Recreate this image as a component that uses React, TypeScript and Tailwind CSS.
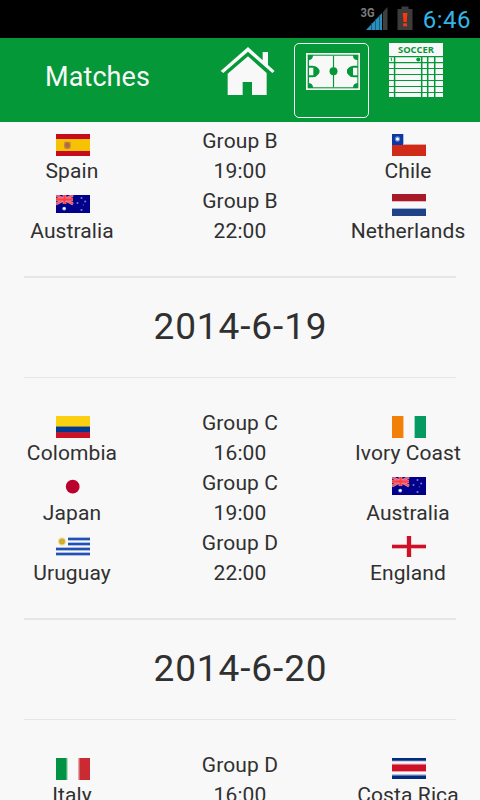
import React from "react";

type Team = "Spain" | "Chile" | "Australia" | "Netherlands" | "Colombia" | "Ivory Coast" | "Japan" | "Uruguay" | "England" | "Italy" | "Costa Rica";
type Match = { home: Team; away: Team; group: string; time: string };

const days: { date: string; matches: Match[] }[] = [
  {
    date: "2014-6-19",
    matches: [
      { home: "Colombia", away: "Ivory Coast", group: "Group C", time: "16:00" },
      { home: "Japan", away: "Australia", group: "Group C", time: "19:00" },
      { home: "Uruguay", away: "England", group: "Group D", time: "22:00" },
    ],
  },
  {
    date: "2014-6-20",
    matches: [{ home: "Italy", away: "Costa Rica", group: "Group D", time: "16:00" }],
  },
];

const earlier: Match[] = [
  { home: "Spain", away: "Chile", group: "Group B", time: "19:00" },
  { home: "Australia", away: "Netherlands", group: "Group B", time: "22:00" },
];

function FlagArt({ team }: { team: Team }) {
  switch (team) {
    case "Spain":
      return (
        <>
          <rect width="34" height="22" fill="#c60b1e" />
          <rect y="5" width="34" height="12" fill="#f8c204" />
          <rect x="8" y="7.5" width="2" height="7" fill="#e0a02c" />
          <rect x="13" y="7.5" width="2" height="7" fill="#e0a02c" />
          <ellipse cx="11.3" cy="11.3" rx="3" ry="3.6" fill="#b87838" />
          <rect x="10.5" y="9.5" width="2" height="3" fill="#8b6a72" />
        </>
      );
    case "Chile":
      return (
        <>
          <rect y="10" width="34" height="12" fill="#d02a18" />
          <rect x="11" y="10" width="23" height="1" fill="#e6a49d" />
          <rect width="11" height="11" fill="#0a39a6" />
          <rect x="11" width="1" height="10" fill="#a9bbe0" />
          <circle cx="5.500" cy="5" r="2.700" fill="#6c88c9" />
          <circle cx="5.500" cy="5" r="1.500" fill="#fff" />
        </>
      );
    case "Australia":
      return (
        <>
          <rect width="34" height="18" fill="#00008b" />
          <path d="M0 0L17 9M17 0L0 9" stroke="#e9a0b4" strokeWidth="2.600" />
          <path d="M0 0L17 9M17 0L0 9" stroke="#f05560" strokeWidth="1.600" />
          <path d="M8.500 0V9M0 4.500H17" stroke="#f3a5b0" strokeWidth="3.600" />
          <path d="M8.500 0V9M0 4.500H17" stroke="#ff3d45" strokeWidth="2.400" />
          <circle cx="8.200" cy="13.600" r="1.900" fill="#b9b9e8" />
          <circle cx="8.200" cy="13.600" r="1" fill="#fff" />
          <g fill="#7d7dc8">
            <circle cx="25.500" cy="3" r="1" />
            <circle cx="21.500" cy="8" r="1" />
            <circle cx="29.200" cy="6.500" r="1" />
            <circle cx="27.300" cy="9.800" r=".6" />
            <circle cx="25.500" cy="15" r="1.100" />
          </g>
        </>
      );
    case "Netherlands":
      return (
        <>
          <rect width="34" height="7" fill="#a91a29" />
          <rect y="7" width="34" height="1" fill="#e3b5ba" />
          <rect y="14" width="34" height="1" fill="#a3b2d0" />
          <rect y="15" width="34" height="7" fill="#1f4289" />
        </>
      );
    case "Colombia":
      return (
        <>
          <rect width="34" height="11" fill="#fbd010" />
          <rect y="10" width="34" height="1" fill="#8f8a4c" />
          <rect y="11" width="34" height="5" fill="#003991" />
          <rect y="16" width="34" height="1" fill="#9a2550" />
          <rect y="17" width="34" height="5" fill="#ce1024" />
        </>
      );
    case "Japan":
      return <circle cx="16.700" cy="10.700" r="6.900" fill="#bc002d" />;
    case "Uruguay":
      return (
        <>
          <g fill="#a9bde3">
            <rect x="12" y="0" width="22" height="4" />
            <rect x="12" y="5" width="22" height="4" />
            <rect y="10" width="34" height="4" />
            <rect y="15" width="34" height="4" />
          </g>
          <g fill="#2450b4">
            <rect x="12" y="1" width="22" height="2" />
            <rect x="12" y="6" width="22" height="2" />
            <rect y="11" width="34" height="2" />
            <rect y="16" width="34" height="2" />
          </g>
          <circle cx="6" cy="4.500" r="4.200" fill="#eee1ac" />
          <circle cx="6" cy="4.500" r="3" fill="#cfae2c" />
        </>
      );
    case "England":
      return (
        <>
          <path d="M17 0V21M0 10.500H34" stroke="#ecafb8" strokeWidth="5" />
          <path d="M17 0V21" stroke="#ce1126" strokeWidth="4" />
          <path d="M0 10.500H34" stroke="#ce1126" strokeWidth="3" />
        </>
      );
    case "Ivory Coast":
      return (
        <>
          <rect width="11" height="22" fill="#f27f06" />
          <rect x="11" width="1" height="22" fill="#f9c48d" />
          <rect x="22" width="1" height="22" fill="#9bd4bf" />
          <rect x="23" width="11" height="22" fill="#049a62" />
        </>
      );
    case "Italy":
      return (
        <>
          <rect width="10" height="22" fill="#009344" />
          <rect x="10" width="1" height="22" fill="#4bb27c" />
          <rect x="11" width="1" height="22" fill="#b4ddc6" />
          <rect x="22" width="1" height="22" fill="#e3a3a7" />
          <rect x="23" width="1" height="22" fill="#d4686e" />
          <rect x="24" width="10" height="22" fill="#ca2b33" />
        </>
      );
    case "Costa Rica":
      return (
        <>
          <rect width="34" height="3" fill="#002b7f" />
          <rect y="2" width="34" height="1" fill="#36599a" />
          <rect y="3" width="34" height="1" fill="#c8d2e4" />
          <rect y="5" width="34" height="1" fill="#f3d5da" />
          <rect y="6" width="34" height="1" fill="#dc7280" />
          <rect y="7" width="34" height="6" fill="#ce1126" />
          <rect y="13" width="34" height="1" fill="#ee9ca7" />
          <rect y="16" width="34" height="1" fill="#b4c2dc" />
          <rect y="17" width="34" height="1" fill="#5d79ac" />
          <rect y="18" width="34" height="3" fill="#002b7f" />
        </>
      );
  }
}

function TeamCell({ team }: { team: Team }) {
  const lower = team === "Australia" || team === "Uruguay";
  return (
    <div className="flex w-[144px] flex-col items-center">
      <div className={lower ? "h-[30px] pt-[9px] pl-[2px]" : "h-[30px] pt-2 pl-[2px]"}>
        <svg width="34" height="22" viewBox="0 0 34 22" aria-label={team}>
          <FlagArt team={team} />
        </svg>
      </div>
      <div className="h-[30px] whitespace-nowrap leading-[30px]">{team}</div>
    </div>
  );
}

function MatchRow({ match }: { match: Match }) {
  return (
    <div className="flex h-[60px] text-[21px] tracking-[0.1px]">
      <TeamCell team={match.home} />
      <div className="w-[192px] text-center leading-[30px]">
        <div>{match.group}</div>
        <div>{match.time}</div>
      </div>
      <TeamCell team={match.away} />
    </div>
  );
}

function StatusBar() {
  return (
    <div className="flex h-[38px] shrink-0 items-center justify-end bg-black pr-[9px]">
      <svg width="60" height="38" viewBox="360 0 60 38">
        <text x="360.500" y="17" fontSize="13" fontWeight="700" fontFamily="Roboto, sans-serif" fill="#7c7c7c" textLength="14" lengthAdjust="spacingAndGlyphs">3G</text>
        <path d="M366 30L382 13V30z" fill="#2b8fbd" />
        <path d="M383 30V12L387.500 7V30z" fill="#3f3f3f" />
        <path d="M371.500 23V30M375.500 19V30M379.500 15V30" stroke="#14516d" strokeWidth=".8" />
        <path d="M397.500 9h4V6.500h7V9h4V30h-15z" fill="#3c3c3c" />
        <path d="M402.800 13h4.600l-.8 9h-3z" fill="#ff3510" />
        <rect x="403.200" y="23.300" width="3.800" height="3" fill="#ff3510" />
      </svg>
      <span className="ml-[3px] pt-[2px] text-[24px] leading-[36px] tracking-[0.5px] text-[#33b5e5]">6:46</span>
    </div>
  );
}

function HomeIcon() {
  return (
    <svg width="75" height="75" viewBox="210 43 75 75">
      <g transform="translate(200 36) scale(.33333)" fill="#f8f8f8">
        <path d="M144 33L188 73V48H204V87L224 105L217 111L144 47L70 111L62 105z" />
        <path d="M144 61L200 111V177H156V138H128V177H83V113z" />
      </g>
    </svg>
  );
}

function PitchIcon() {
  return (
    <svg width="73" height="73" viewBox="295 44 73 73">
      <g transform="translate(285 36) scale(.33333)">
        <rect x="63" y="51" width="162" height="111" fill="#f8f8f8" />
        <rect x="68" y="56" width="152" height="101" fill="#049839" />
        <path d="M84 59H204Q205 72 217 72V89H204L186 101V111L204 124H217V141Q205 142 204 154H84Q83 142 72 141V124H84L103 111V101L84 89H72V72Q83 71 84 59z" fill="#f8f8f8" />
        <path d="M72 91H91Q103 97 103 106Q103 115 91 123H72zM217 91H198Q186 97 186 106Q186 115 198 123H217z" fill="#049839" />
        <path d="M72 95H85V118H72zM204 95H217V118H204z" fill="#f8f8f8" />
        <path d="M145.500 59V154" stroke="#049839" strokeWidth="3.500" />
        <circle cx="145.500" cy="106" r="12" fill="#049839" />
      </g>
    </svg>
  );
}

function ScoreIcon() {
  return (
    <svg width="75" height="75" viewBox="378 43 75 75">
      <rect x="389" y="43" width="54" height="54" fill="#f8f8f8" />
      <text x="398" y="53" fontSize="9" fontWeight="700" fontFamily="Open Sans, sans-serif" fill="#049839" textLength="36" lengthAdjust="spacingAndGlyphs">SOCCER</text>
      <path d="M389 56.700H443M389 62.600H443M389 68.500H443M389 74.500H443M389 80.500H443M389 86.500H443M389 92.500H443" stroke="#049839" strokeWidth="1.200" />
      <path d="M394.600 57V97M421.700 57V97M427.700 57V97M434.700 57V97" stroke="#049839" strokeWidth="1.500" />
      <circle cx="418.300" cy="59.500" r="2" fill="#049839" />
      <path d="M390.500 58.800L391.500 58V61" stroke="#049839" strokeWidth=".8" fill="none" />
    </svg>
  );
}

export default function App() {
  return (
    <div className="flex h-[800px] w-[480px] flex-col overflow-hidden bg-[#f8f8f8] text-[#303030] [font-family:Roboto,'Liberation_Sans',sans-serif]">
      <StatusBar />
      <header className="flex h-[84px] shrink-0 gap-[9px] bg-[#049839] pt-[5px]">
        <h1 className="w-[201px] pl-[45px] text-[27px] leading-[68px] tracking-[0.1px] text-[#f8f8f8]">Matches</h1>
        <HomeIcon />
        <div className="h-[75px] w-[75px] rounded-[5px] border border-[#f8f8f8]">
          <PitchIcon />
        </div>
        <ScoreIcon />
      </header>
      <main className="min-h-0 flex-1 overflow-hidden pt-1">
        {earlier.map((m) => (
          <MatchRow key={m.home} match={m} />
        ))}
        {days.map((day) => (
          <section key={day.date} className="pt-[30px]">
            <h2 className="mx-6 mb-[30px] h-[102px] border-t-2 border-b border-[#e6e6e6] pl-px text-center text-[37px] leading-[98px] tracking-[0.9px]">{day.date}</h2>
            {day.matches.map((m) => (
              <MatchRow key={m.home} match={m} />
            ))}
          </section>
        ))}
      </main>
    </div>
  );
}
